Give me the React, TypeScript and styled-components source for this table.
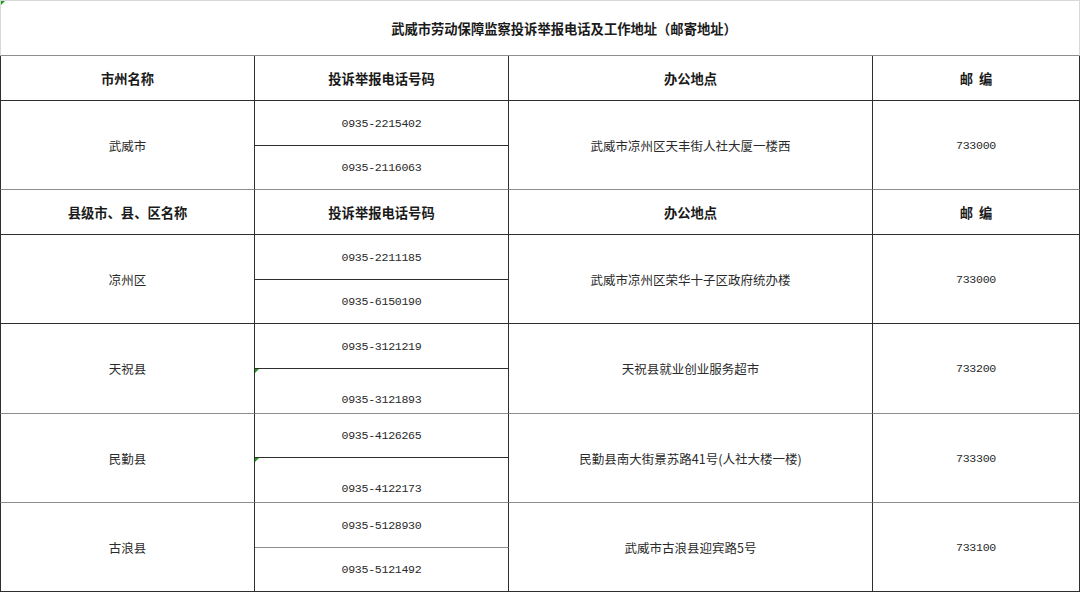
import React from "react";
import styled, { createGlobalStyle, css } from "styled-components";

const Global = createGlobalStyle`
  html, body { margin: 0; padding: 0; background: #ffffff; }
  body { font-family: "Noto Sans CJK SC", "Noto Sans", sans-serif; color: #222; }
`;

const DARK = "#2e2e2e";
const GRAY = "#8e8e8e";
const LIGHT = "#d8d8d8";

const Sheet = styled.div`
  display: grid;
  width: 1080px;
  grid-template-columns: 255px 254px 364px 207px;
  grid-template-rows: 56px 45px 45px 44px 45px 45px 44px 45px 45px 44px 45px 45px 44px;
  box-sizing: border-box;
`;

const Title = styled.div`
  grid-column: 1 / span 4;
  box-sizing: border-box;
  position: relative;
  border-top: 1px solid ${LIGHT};
  border-left: 1px solid ${LIGHT};
  border-right: 1px solid ${LIGHT};
  border-bottom: 1px solid ${GRAY};
  display: flex;
  align-items: center;
  justify-content: center;
  padding-left: 48px;
  font-size: 13.3px;
  font-weight: 700;
  color: #1a1a1a;
  &::before {
    content: "";
    position: absolute;
    left: 0;
    top: 0;
    border-top: 4px solid #1f9a1f;
    border-right: 4px solid transparent;
  }
`;

type CellProps = {
  $first?: boolean;
  $span?: number;
  $bottomGray?: boolean;
  $head?: boolean;
  $mono?: boolean;
  $low?: boolean;
  $mark?: boolean;
};

const Cell = styled.div<CellProps>`
  box-sizing: border-box;
  position: relative;
  display: flex;
  align-items: ${(p) => (p.$low ? "flex-end" : "center")};
  justify-content: center;
  padding-bottom: ${(p) => (p.$low ? "7px" : "0")};
  border-right: 1px solid ${DARK};
  border-bottom: 1px solid ${(p) => (p.$bottomGray ? GRAY : DARK)};
  ${(p) => p.$first && css`border-left: 1px solid ${DARK};`}
  ${(p) => p.$span && css`grid-row: span ${p.$span};`}
  white-space: nowrap;
  ${(p) =>
    p.$head
      ? css`
          font-size: 13.3px;
          font-weight: 700;
          color: #1a1a1a;
        `
      : p.$mono
      ? css`
          font-family: "Liberation Mono", "DejaVu Sans Mono", monospace;
          font-size: 11.6px;
          letter-spacing: -0.3px;
          color: #2a2a2a;
        `
      : css`
          font-size: 12.5px;
          color: #2a2a2a;
        `}
  ${(p) =>
    p.$mark &&
    css`
      &::before {
        content: "";
        position: absolute;
        left: 0;
        top: 0;
        border-top: 4px solid #1f9a1f;
        border-right: 4px solid transparent;
      }
    `}
`;

type Group = {
  name: string;
  phones: [string, string];
  address: string;
  zip: string;
  lowSecond?: boolean;
  grayBottom?: boolean;
  graySplit?: boolean;
};

const Header: React.FC<{ first: string; grayBottom?: boolean }> = ({ first, grayBottom }) => (
  <>
    <Cell $first $head $bottomGray={grayBottom}>{first}</Cell>
    <Cell $head $bottomGray={grayBottom}>投诉举报电话号码</Cell>
    <Cell $head $bottomGray={grayBottom}>办公地点</Cell>
    <Cell $head $bottomGray={grayBottom}>邮&nbsp;&nbsp;编</Cell>
  </>
);

const GroupRows: React.FC<{ g: Group }> = ({ g }) => (
  <>
    <Cell $first $span={2} $bottomGray={g.grayBottom}>{g.name}</Cell>
    <Cell $mono $bottomGray={g.graySplit}>{g.phones[0]}</Cell>
    <Cell $span={2} $bottomGray={g.grayBottom}>{g.address}</Cell>
    <Cell $mono $span={2} $bottomGray={g.grayBottom}>{g.zip}</Cell>
    <Cell $mono $low={g.lowSecond} $mark={g.lowSecond} $bottomGray={g.grayBottom}>
      {g.phones[1]}
    </Cell>
  </>
);

const city: Group = {
  name: "武威市",
  phones: ["0935-2215402", "0935-2116063"],
  address: "武威市凉州区天丰街人社大厦一楼西",
  zip: "733000",
  grayBottom: true,
};

const counties: Group[] = [
  {
    name: "凉州区",
    phones: ["0935-2211185", "0935-6150190"],
    address: "武威市凉州区荣华十子区政府统办楼",
    zip: "733000",
  },
  {
    name: "天祝县",
    phones: ["0935-3121219", "0935-3121893"],
    address: "天祝县就业创业服务超市",
    zip: "733200",
    lowSecond: true,
    grayBottom: true,
  },
  {
    name: "民勤县",
    phones: ["0935-4126265", "0935-4122173"],
    address: "民勤县南大街景苏路41号(人社大楼一楼)",
    zip: "733300",
    lowSecond: true,
    grayBottom: true,
  },
  {
    name: "古浪县",
    phones: ["0935-5128930", "0935-5121492"],
    address: "武威市古浪县迎宾路5号",
    zip: "733100",
    graySplit: true,
  },
];

export default function App() {
  return (
    <>
      <Global />
      <Sheet>
        <Title>武威市劳动保障监察投诉举报电话及工作地址（邮寄地址）</Title>
        <Header first="市州名称" />
        <GroupRows g={city} />
        <Header first="县级市、县、区名称" />
        {counties.map((g) => (
          <GroupRows key={g.name} g={g} />
        ))}
      </Sheet>
    </>
  );
}
